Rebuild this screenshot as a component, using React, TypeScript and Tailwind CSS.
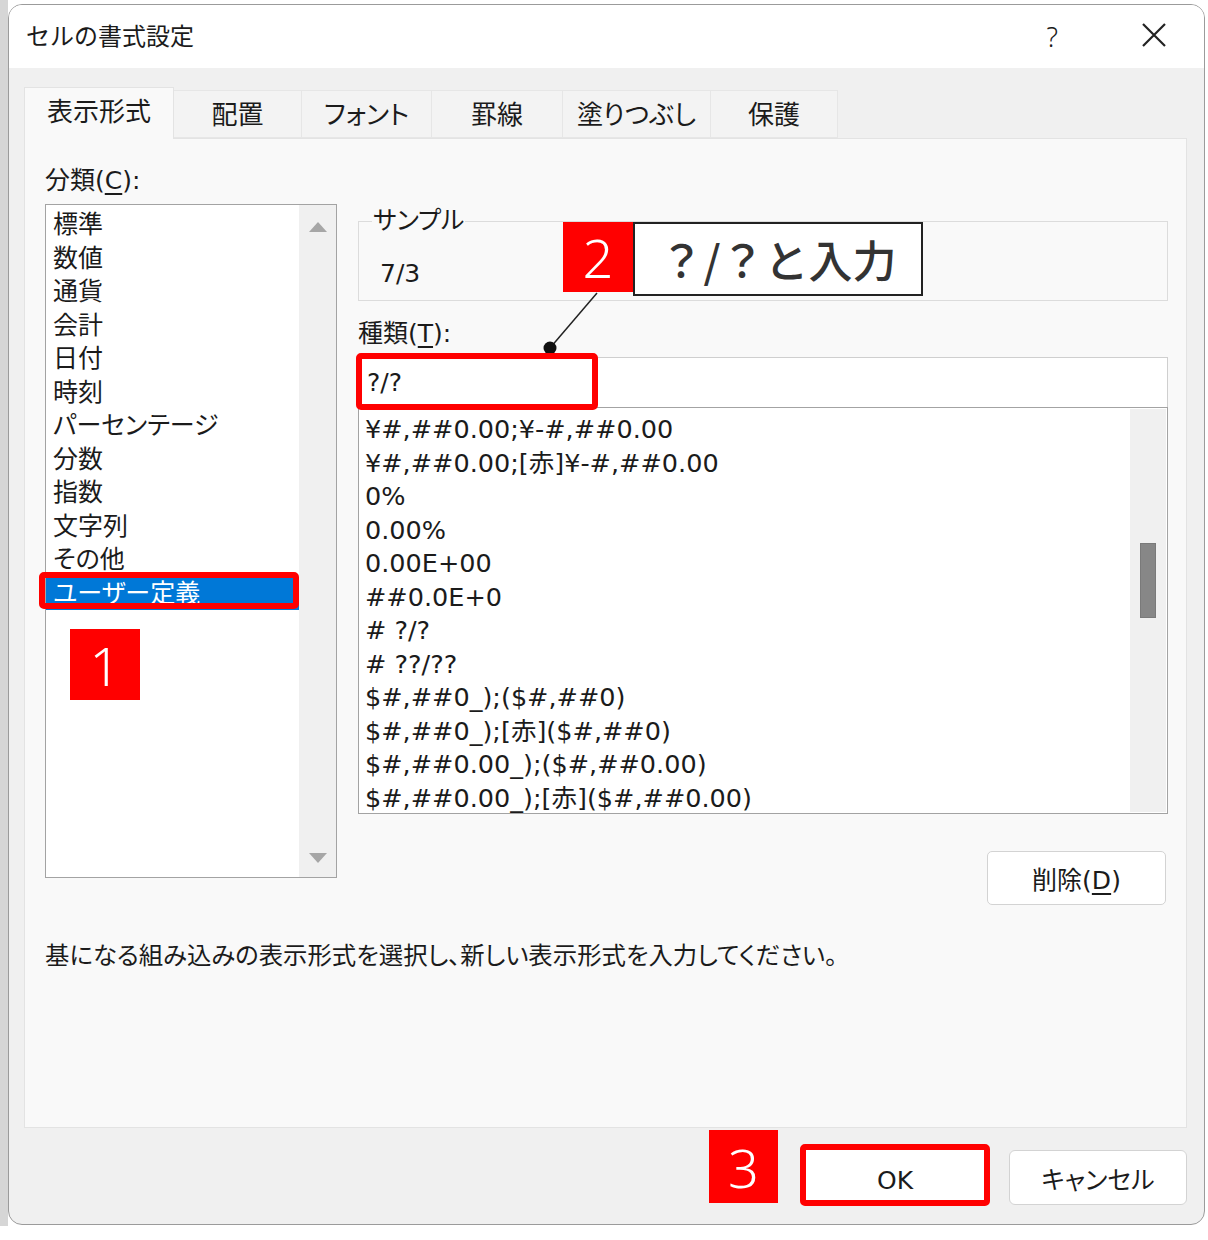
const CATEGORIES = ["標準", "数値", "通貨", "会計", "日付", "時刻", "パーセンテージ", "分数", "指数", "文字列", "その他", "ユーザー定義"];

const FORMATS = [
  "¥#,##0.00;¥-#,##0.00",
  "¥#,##0.00;[赤]¥-#,##0.00",
  "0%",
  "0.00%",
  "0.00E+00",
  "##0.0E+0",
  "# ?/?",
  "# ??/??",
  "$#,##0_);($#,##0)",
  "$#,##0_);[赤]($#,##0)",
  "$#,##0.00_);($#,##0.00)",
  "$#,##0.00_);[赤]($#,##0.00)",
];

const TABS = [
  { label: "配置", w: "w-[128px]" },
  { label: "フォント", w: "w-[130px]" },
  { label: "罫線", w: "w-[131px]" },
  { label: "塗りつぶし", w: "w-[148px]" },
  { label: "保護", w: "w-[127px]" },
];

function Badge({ n, className }: { n: string; className: string }) {
  return (
    <div className={`flex items-center justify-center bg-[#ff0000] text-white font-['Noto_Sans',sans-serif] font-light text-[54px] leading-none ${className}`}>
      {n}
    </div>
  );
}

export default function App() {
  return (
    <div className="flex h-[1240px] w-[1208px] overflow-hidden bg-white font-['DejaVu_Sans','Noto_Sans_CJK_JP',sans-serif] text-[#1b1b1b] [font-feature-settings:'palt']">
      {/* spreadsheet peeking out on the left */}
      <div className="h-[1226px] w-[8px] shrink-0 bg-[#d6d6d6]" />

      <div className="mt-[4px] flex h-[1221px] w-[1197px] shrink-0 flex-col overflow-hidden rounded-[14px] border border-[#9b9b9b] bg-[#f0f0f0]">
        {/* title bar */}
        <div className="flex h-[63px] shrink-0 items-center bg-white pl-[17px] pr-[37px]">
          <span className="text-[24px] [font-feature-settings:normal]">セルの書式設定</span>
          <span className="ml-auto mr-[83px] pt-[2px] font-['Noto_Sans',sans-serif] text-[27px] font-light">?</span>
          <svg className="mb-[3px]" width="26" height="26" viewBox="0 0 26 26" stroke="#222" strokeWidth="2.2" fill="none">
            <path d="M2 2l22 22M24 2L2 24" />
          </svg>
        </div>

        <div className="flex flex-col pl-[15px] pr-[17px] pt-[19px]">
          {/* tabs */}
          <div className="flex h-[51px] items-end">
            <div className="relative -mb-px flex h-[52px] w-[150px] items-center justify-center border border-b-0 border-[#e3e3e3] bg-[#f9f9f9] pb-[2px] text-[26px]">
              表示形式
            </div>
            {TABS.map((t) => (
              <div key={t.label} className={`flex h-[48px] items-center justify-center border border-l-0 border-[#e6e6e6] bg-[#f3f3f3] pt-[2px] text-[26px] ${t.w}`}>
                {t.label}
              </div>
            ))}
          </div>

          {/* panel */}
          <div className="flex h-[990px] flex-col border border-[#e3e3e3] bg-[#f9f9f9] pl-[20px] pr-[18px] pt-[25px]">
            <div className="flex gap-[21px]">
              {/* category list */}
              <div className="flex w-[292px] shrink-0 flex-col">
                <div className="h-[34px] text-[25px] leading-[34px]">
                  分類(<span className="underline underline-offset-4">C</span>):
                </div>
                <div className="relative mt-[6px] flex h-[674px] border border-[#a3a3a3] bg-white">
                  <div className="flex flex-1 flex-col pt-[3px]">
                    {CATEGORIES.map((c, i) => (
                      <div
                        key={c}
                        className={`h-[33.5px] pl-[7px] text-[25px] leading-[33.5px] ${i === CATEGORIES.length - 1 ? "bg-[#0078d7] text-white" : ""}`}
                      >
                        {c}
                      </div>
                    ))}
                  </div>
                  <div className="flex w-[37px] flex-col items-center justify-between bg-[#f0f0f0] pb-[14px] pt-[17px]">
                    <svg width="18" height="10" viewBox="0 0 18 10"><path d="M9 0L18 10H0z" fill="#a6a6a6" /></svg>
                    <svg width="18" height="10" viewBox="0 0 18 10"><path d="M0 0h18L9 10z" fill="#a6a6a6" /></svg>
                  </div>
                  {/* annotation 1 */}
                  <div className="absolute left-[-7px] top-[367px] h-[37px] w-[260px] rounded-[5px] border-[6px] border-[#ff0000]" />
                  <Badge n="1" className="absolute left-[24px] top-[424px] h-[71px] w-[70px]" />
                </div>
              </div>

              {/* format type */}
              <div className="flex flex-1 flex-col">
                <fieldset className="relative mt-[42px] h-[95px] border border-[#dcdcdc] pl-[13px]">
                  <legend className="px-[1px] text-[25px] leading-[30px]">サンプル</legend>
                  <div className="mt-[23px] pl-[8px] text-[25px] leading-[30px]">7/3</div>
                  {/* annotation 2 */}
                  <div className="absolute left-[204px] top-[-14px] flex items-start">
                    <Badge n="2" className="h-[70px] w-[70px]" />
                    <div className="flex h-[74px] w-[290px] items-center justify-center border-2 border-[#222] bg-white font-['Noto_Sans_CJK_JP',sans-serif] text-[44px] font-medium text-[#333] [font-feature-settings:normal]">
                      ？/？と入力
                    </div>
                  </div>
                  <svg className="absolute left-[184px] top-[56px] overflow-visible" width="60" height="60" viewBox="0 0 60 60">
                    <path d="M54 1L7 56" stroke="#222" strokeWidth="1.5" />
                    <circle cx="7" cy="56" r="6.5" fill="#111" />
                  </svg>
                </fieldset>

                <div className="mt-[18px] h-[30px] text-[25px] leading-[30px]">
                  種類(<span className="underline underline-offset-4">T</span>):
                </div>
                <div className="relative mt-[8px] flex h-[50px] items-center border border-b-0 border-[#cfcfcf] bg-white pl-[8px] text-[25px]">
                  ?/?
                  <div className="absolute left-[-3px] top-[-5px] h-[57px] w-[242px] rounded-[5px] border-[6px] border-[#ff0000]" />
                </div>
                <div className="flex h-[407px] border border-[#a3a3a3] bg-white">
                  <div className="flex flex-1 flex-col pl-[6px] pt-[5px] text-[25.5px]">
                    {FORMATS.map((f) => (
                      <div key={f} className="h-[33.5px] whitespace-pre leading-[33.5px]">{f}</div>
                    ))}
                  </div>
                  <div className="my-[1px] mr-[1px] flex w-[36px] justify-center bg-[#f0f0f0] pt-[134px]">
                    <div className="h-[75px] w-[16px] border border-[#7a7a7a] bg-[#878787]" />
                  </div>
                </div>

                <div className="mt-[37px] flex justify-end pr-[2px]">
                  <div className="flex h-[54px] w-[179px] items-center justify-center rounded-[5px] border border-[#d3d3d3] bg-white pt-[5px] text-[25px]">
                    削除(<span className="underline underline-offset-4">D</span>)
                  </div>
                </div>
              </div>
            </div>

            <div className="mt-[36px] text-[24.4px] leading-[30px]">
              基になる組み込みの表示形式を選択し、新しい表示形式を入力してください。
            </div>
          </div>
        </div>

        {/* buttons */}
        <div className="flex justify-end pr-[17px] pt-[2px]">
          <Badge n="3" className="h-[73px] w-[69px]" />
          <div className="ml-[22px] mt-[14px] h-[62px] w-[190px] rounded-[5px] border-[6px] border-[#ff0000]">
            <div className="flex h-full items-center justify-center bg-white pt-[12px] text-[25px]">OK</div>
          </div>
          <div className="ml-[19px] mt-[20px] flex h-[55px] w-[178px] items-center justify-center rounded-[6px] border border-[#d3d3d3] bg-white pt-[7px] text-[25px]">
            キャンセル
          </div>
        </div>
      </div>
    </div>
  );
}
